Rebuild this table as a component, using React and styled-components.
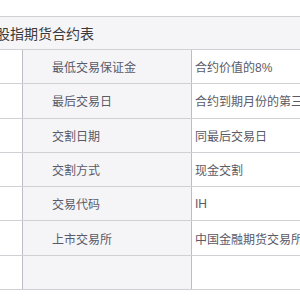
import React from "react";
import styled, { createGlobalStyle } from "styled-components";

const Global = createGlobalStyle`
  html, body { margin: 0; padding: 0; background: #ffffff; }
  body { font-family: "Liberation Sans", "Noto Sans CJK SC", sans-serif; }
`;

const Page = styled.div`
  width: 300px;
  height: 300px;
  overflow: hidden;
  padding-top: 16px;
  box-sizing: border-box;
`;

const Table = styled.div`
  width: 300px;
  display: flex;
  flex-direction: column;
`;

const Title = styled.div`
  height: 32px;
  border-top: 1px solid #cfcfd4;
  border-bottom: 1px solid #cfcfd4;
  background: #f5f5f8;
  display: flex;
  align-items: center;
  font-size: 14px;
  color: #3a3a3a;
  margin-left: -4px;
  white-space: nowrap;
`;

const Row = styled.div`
  display: grid;
  grid-template-columns: 23px 169px 1fr;
  height: 33.3px;
  border-bottom: 1px solid #cfcfd4;
`;

const Cell = styled.div`
  display: flex;
  align-items: center;
  font-size: 12px;
  white-space: nowrap;
  overflow: hidden;
  color: #5a5a66;
  background: ${(p) => (p.$label ? "#f5f5f8" : "#ffffff")};
  padding-left: ${(p) => (p.$label ? "29px" : p.$value ? "3px" : "0")};
  border-right: ${(p) => (p.$value ? "none" : "1px solid #bdbdc4")};
`;

const rows = [
  ["最低交易保证金", "合约价值的8%"],
  ["最后交易日", "合约到期月份的第三个周五"],
  ["交割日期", "同最后交易日"],
  ["交割方式", "现金交割"],
  ["交易代码", "IH"],
  ["上市交易所", "中国金融期货交易所"],
  ["", ""],
];

export default function App() {
  return (
    <>
      <Global />
      <Page>
        <Table>
          <Title>股指期货合约表</Title>
          {rows.map(([label, value], i) => (
            <Row key={i}>
              <Cell />
              <Cell $label>{label}</Cell>
              <Cell $value>{value}</Cell>
            </Row>
          ))}
        </Table>
      </Page>
    </>
  );
}
